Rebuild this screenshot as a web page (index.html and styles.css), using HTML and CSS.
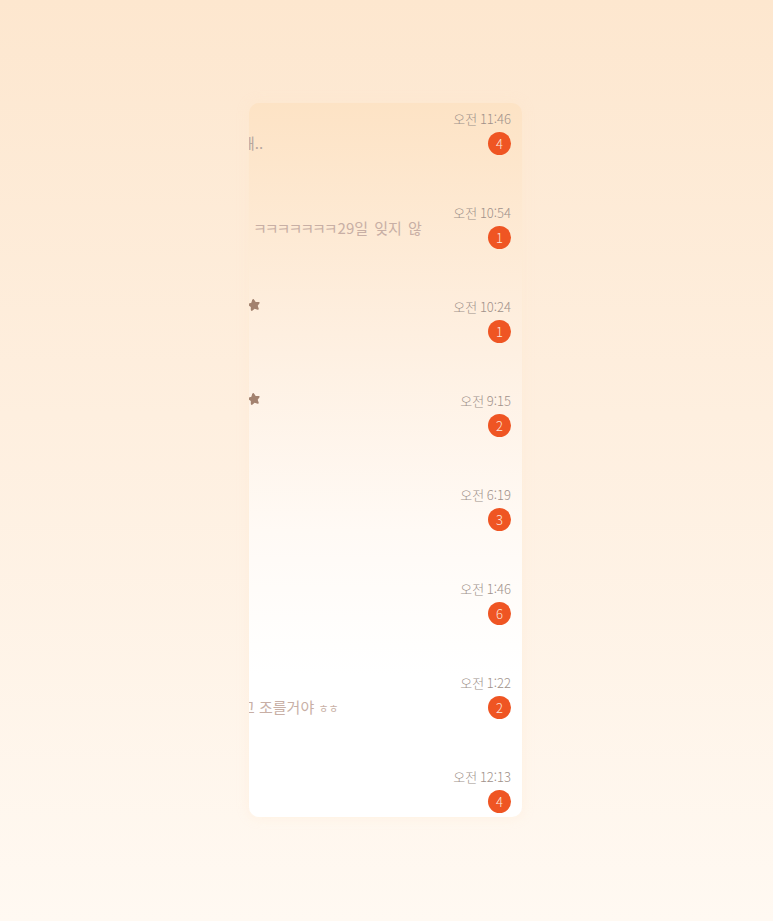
FILE: index.html
```html
<!DOCTYPE html>
<html lang="ko">
<head>
<meta charset="utf-8">
<link rel="stylesheet" href="styles.css">
</head>
<body>
<div class="page">
  <div class="card">
    <div class="row">
      <div class="left"><span class="preview p-low gray"><span class="cut8">해</span>..</span></div>
      <div class="right"><span class="time">오전 11:46</span><span class="badge">4</span></div>
    </div>
    <div class="row">
      <div class="left"><span class="preview p-mid"><span class="kk">ㅋㅋㅋㅋㅋㅋㅋ</span>29일 잊지 않</span></div>
      <div class="right"><span class="time">오전 10:54</span><span class="badge">1</span></div>
    </div>
    <div class="row">
      <div class="left"><svg class="star" viewBox="0 0 24 24"><path d="M12 1.8c.7 0 1.2.4 1.5 1l2.3 4.8 5.2.7c1.2.2 1.7 1.6.8 2.5l-3.8 3.7.9 5.2c.2 1.2-1.1 2.1-2.2 1.5L12 18.7l-4.7 2.5c-1.1.6-2.4-.3-2.2-1.5l.9-5.2-3.8-3.7c-.9-.9-.4-2.3.8-2.5l5.2-.7 2.3-4.8c.3-.6.8-1 1.5-1z"/></svg></div>
      <div class="right"><span class="time">오전 10:24</span><span class="badge">1</span></div>
    </div>
    <div class="row">
      <div class="left"><svg class="star" viewBox="0 0 24 24"><path d="M12 1.8c.7 0 1.2.4 1.5 1l2.3 4.8 5.2.7c1.2.2 1.7 1.6.8 2.5l-3.8 3.7.9 5.2c.2 1.2-1.1 2.1-2.2 1.5L12 18.7l-4.7 2.5c-1.1.6-2.4-.3-2.2-1.5l.9-5.2-3.8-3.7c-.9-.9-.4-2.3.8-2.5l5.2-.7 2.3-4.8c.3-.6.8-1 1.5-1z"/></svg></div>
      <div class="right"><span class="time">오전 9:15</span><span class="badge">2</span></div>
    </div>
    <div class="row">
      <div class="left"></div>
      <div class="right"><span class="time">오전 6:19</span><span class="badge">3</span></div>
    </div>
    <div class="row">
      <div class="left"></div>
      <div class="right"><span class="time">오전 1:46</span><span class="badge">6</span></div>
    </div>
    <div class="row">
      <div class="left"><span class="preview p-low"><span class="cut6">고</span> 조를거야 <span class="hh">ㅎㅎ</span></span></div>
      <div class="right"><span class="time">오전 1:22</span><span class="badge">2</span></div>
    </div>
    <div class="row">
      <div class="left"></div>
      <div class="right"><span class="time">오전 12:13</span><span class="badge">4</span></div>
    </div>
  </div>
</div>
</body>
</html>
```
FILE: styles.css
```css
html, body {
  margin: 0;
  padding: 0;
}
body {
  width: 773px;
  height: 921px;
  overflow: hidden;
  font-family: "Noto Sans CJK KR", "Noto Sans", sans-serif;
  background: linear-gradient(180deg, #fde7cf 0%, #feefdf 45%, #fff9f2 100%);
}
.page {
  padding-top: 103px;
  padding-left: 249px;
}
.card {
  width: 273px;
  height: 714px;
  overflow: hidden;
  border-radius: 10px;
  background: linear-gradient(180deg, #fde3c5 0%, #fef0e2 35%, #fffaf5 60%, #ffffff 80%, #ffffff 100%);
  box-shadow: 0 0 12px rgba(255, 230, 200, 0.35);
}
.row {
  height: 94px;
  display: flex;
  justify-content: space-between;
}
.left {
  flex: 1;
  min-width: 0;
  overflow: hidden;
}
.right {
  display: flex;
  flex-direction: column;
  align-items: flex-end;
  padding-right: 11px;
  padding-top: 6px;
}
.time {
  font-size: 13px;
  line-height: 20px;
  font-weight: 300;
  color: #a0918a;
  white-space: nowrap;
  word-spacing: -1px;
}
.badge {
  width: 23px;
  height: 23px;
  border-radius: 50%;
  background: #ef5523;
  color: #fde6dc;
  font-size: 13px;
  font-weight: 300;
  line-height: 23px;
  text-align: center;
  margin-top: 3px;
}
.preview {
  display: block;
  white-space: nowrap;
  font-size: 15px;
  line-height: 20px;
  color: #c8afa5;
}
.preview.gray {
  color: #b6a69e;
}
.p-low {
  margin-top: 30px;
}
.p-mid {
  margin-top: 21px;
  padding-left: 4px;
  word-spacing: 2px;
}
.kk {
  letter-spacing: -2px;
  margin-right: 2px;
}
.hh {
  font-size: 11px;
}
.cut8 {
  display: inline-block;
  margin-left: -8px;
}
.cut6 {
  display: inline-block;
  margin-left: -8px;
}
.star {
  display: block;
  width: 14px;
  height: 14px;
  fill: #a3826f;
  margin-top: 7px;
  margin-left: -2px;
  transform: rotate(-10deg);
}
```
